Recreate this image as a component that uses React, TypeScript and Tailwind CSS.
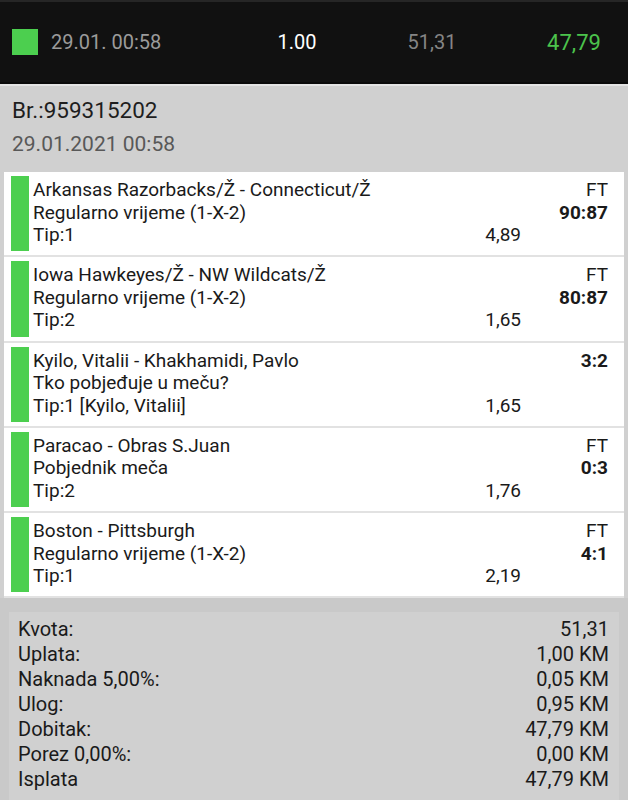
import React from "react";

type Bet = {
  teams: string;
  market: string;
  tip: string;
  odds: string;
  status: string;
  score: string;
};

const bets: Bet[] = [
  { teams: "Arkansas Razorbacks/Ž - Connecticut/Ž", market: "Regularno vrijeme (1-X-2)", tip: "Tip:1", odds: "4,89", status: "FT", score: "90:87" },
  { teams: "Iowa Hawkeyes/Ž - NW Wildcats/Ž", market: "Regularno vrijeme (1-X-2)", tip: "Tip:2", odds: "1,65", status: "FT", score: "80:87" },
  { teams: "Kyilo, Vitalii - Khakhamidi, Pavlo", market: "Tko pobjeđuje u meču?", tip: "Tip:1 [Kyilo, Vitalii]", odds: "1,65", status: "", score: "3:2" },
  { teams: "Paracao - Obras S.Juan", market: "Pobjednik meča", tip: "Tip:2", odds: "1,76", status: "FT", score: "0:3" },
  { teams: "Boston - Pittsburgh", market: "Regularno vrijeme (1-X-2)", tip: "Tip:1", odds: "2,19", status: "FT", score: "4:1" },
];

const summary: [string, string][] = [
  ["Kvota:", "51,31"],
  ["Uplata:", "1,00 KM"],
  ["Naknada 5,00%:", "0,05 KM"],
  ["Ulog:", "0,95 KM"],
  ["Dobitak:", "47,79 KM"],
  ["Porez 0,00%:", "0,00 KM"],
  ["Isplata", "47,79 KM"],
];

function BetCard({ b }: { b: Bet }) {
  const first = b.status ? b.status : b.score;
  const second = b.status ? b.score : "";
  return (
    <div className="flex h-[83.25px] bg-white">
      <div className="ml-[7px] my-[4px] w-[18px] bg-[#4ccf4f]" />
      <div className="flex-1 pl-[4px] pt-[7px] text-[19px] leading-[22.5px] text-[#1a1a1a]">
        <div className="flex">
          <div className="flex-1 whitespace-nowrap">{b.teams}</div>
          <div className={`w-[87px] pr-[16px] text-right ${b.status ? "" : "font-bold"}`}>{first}</div>
        </div>
        <div className="flex">
          <div className="flex-1 whitespace-nowrap">{b.market}</div>
          <div className="w-[87px] pr-[16px] text-right font-bold">{second}</div>
        </div>
        <div className="flex">
          <div className="flex-1 whitespace-nowrap">{b.tip}</div>
          <div className="w-[60px] text-right">{b.odds}</div>
          <div className="w-[103px]" />
        </div>
      </div>
    </div>
  );
}

export default function App() {
  return (
    <div className="w-[628px] h-[800px] overflow-hidden bg-[#c9c9c9]" style={{ fontFamily: "Roboto, 'Liberation Sans', sans-serif" }}>
      {/* top bar */}
      <div className="h-[82px] bg-[#111111] border-t-[2px] border-[#262626] flex items-center">
        <div className="ml-[12px] w-[26px] h-[26px] bg-[#4ccf4f]" />
        <div className="ml-[13px] w-[200px] text-[20px] text-[#9b9b9b]">29.01. 00:58</div>
        <div className="w-[92px] text-center text-[20px] text-white">1.00</div>
        <div className="w-[178px] text-center text-[20px] text-[#858585]">51,31</div>
        <div className="w-[106px] text-center text-[22px] text-[#4cc34c]">47,79</div>
      </div>
      <div className="h-[2px] bg-[#0a0a0a]" />
      <div className="h-[2px] bg-[#e4e4e4]" />
      {/* ticket header */}
      <div className="bg-[#d0d0d0] pl-[12px] pt-[11px] h-[86px]">
        <div className="text-[22.5px] leading-[26px] text-[#1e1e1e]">Br.:959315202</div>
        <div className="mt-[8px] text-[21px] leading-[26px] text-[#585858]">29.01.2021 00:58</div>
      </div>
      {/* bets */}
      <div className="bg-[#d0d0d0] px-[4px]">
        <div className="flex flex-col gap-[2px] bg-[#e2e2e2] pb-[2px]">
          {bets.map((b, i) => (
            <BetCard key={i} b={b} />
          ))}
        </div>
      </div>
      {/* summary */}
      <div className="px-[9px] pt-[14px]">
        <div className="bg-[#d0d0d0] pl-[9px] pr-[10px] pt-[5px] pb-[10px] text-[20px] leading-[25px] text-[#1a1a1a]">
          {summary.map(([k, v]) => (
            <div key={k} className="flex justify-between">
              <span>{k}</span>
              <span>{v}</span>
            </div>
          ))}
        </div>
      </div>
    </div>
  );
}
